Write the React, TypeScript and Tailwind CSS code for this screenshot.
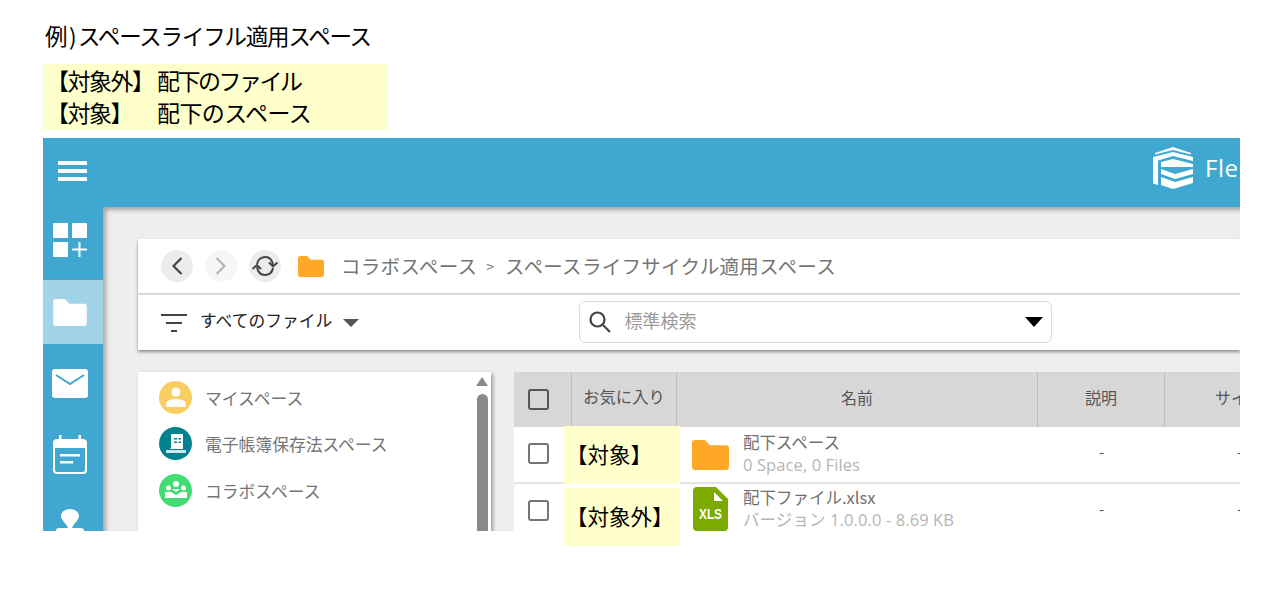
import React from 'react';

const JP = "font-['Noto_Sans_CJK_JP',sans-serif]";

const FolderIcon = ({ className, fill }: { className: string; fill: string }) => (
  <svg viewBox="0 0 36 29" className={className}>
    <path d="M3 0h9.5l5 5H33a3 3 0 0 1 3 3v18a3 3 0 0 1-3 3H3a3 3 0 0 1-3-3V3a3 3 0 0 1 3-3z" fill={fill} />
  </svg>
);

const Logo = () => (
  <svg viewBox="0 0 40 42" className="w-[40px] h-[42px] shrink-0" fill="#fff">
    <path d="M20 0 38 6v1.500L20 3 2 7.500V6z" />
    <path d="M0 10 20 5l20 5v4L20 9 5 13.500V38l-5-1.500z" />
    <path d="M8 15 20 12l20 5v3H8z" />
    <path d="M8 22l14 5 18-5v5l-18 5-14-5z" />
    <path d="M8 30l14 5 18-5v6l-20 6-12-4z" />
  </svg>
);

const SideItem = ({ className, children }: { className: string; children: React.ReactNode }) => (
  <div className={`shrink-0 flex items-center justify-center pr-[6px] ${className}`}>{children}</div>
);

const Sidebar = () => (
  <div className="w-[60px] shrink-0 flex flex-col">
    <SideItem className="h-[73px] pb-[7px] border-b border-[#6b9db3]">
      <svg viewBox="0 0 34 34" className="w-[34px] h-[34px]" fill="#fff">
        <rect x="0" y="0" width="15" height="15" rx="1" />
        <rect x="19" y="0" width="15" height="15" rx="1" />
        <rect x="0" y="19" width="15" height="15" rx="1" />
        <path d="M25.500 19h2v6.500H34v2h-6.500V34h-2v-6.500H19v-2h6.500z" />
      </svg>
    </SideItem>
    <SideItem className="h-[64px] bg-[#a2d4e8]">
      <FolderIcon className="w-[34px] h-[27px]" fill="#fff" />
    </SideItem>
    <SideItem className="h-[79px]">
      <svg viewBox="0 0 36 29" className="w-[36px] h-[29px]">
        <rect width="36" height="29" rx="3" fill="#fff" />
        <path d="M4 6l14 9 14-9" fill="none" stroke="#40a8d0" strokeWidth="2" />
      </svg>
    </SideItem>
    <SideItem className="h-[62px]">
      <svg viewBox="0 0 34 39" className="w-[34px] h-[39px]">
        <rect x="1" y="5" width="32" height="33" rx="3" fill="none" stroke="#fff" strokeWidth="2" />
        <path d="M1 8a3 3 0 0 1 3-3h26a3 3 0 0 1 3 3v5H1z" fill="#fff" />
        <rect x="6" y="0" width="2.500" height="6" fill="#fff" />
        <rect x="25.500" y="0" width="2.500" height="6" fill="#fff" />
        <rect x="7" y="19" width="20" height="2.500" fill="#fff" />
        <rect x="7" y="26" width="13" height="2.500" fill="#fff" />
      </svg>
    </SideItem>
    <div className="shrink-0 flex justify-center pr-[6px] pt-[24px]">
      <svg viewBox="0 0 28 40" className="w-[28px] h-[40px] shrink-0" fill="#fff">
        <path d="M14 0c5 0 9 3 9 7 0 4-5 7-7 12h-4C10 14 5 11 5 7c0-4 4-7 9-7z" />
        <rect x="0" y="19" width="28" height="14" rx="3" />
      </svg>
    </div>
  </div>
);

const Toolbar = () => (
  <div className="bg-white shadow-[0_2px_3px_rgba(0,0,0,0.4)]">
    <div className="h-[56px] border-b-2 border-[#d9d9d9] flex items-center pl-[23px]">
      <div className="w-8 h-8 rounded-full bg-[#ececec] flex items-center justify-center">
        <svg viewBox="0 0 12 20" className="w-[12px] h-[20px]" fill="none" stroke="#444" strokeWidth="2.200">
          <path d="M10.500 2 2.500 10l8 8" />
        </svg>
      </div>
      <div className="w-8 h-8 rounded-full bg-[#f6f6f6] flex items-center justify-center ml-[12px]">
        <svg viewBox="0 0 12 20" className="w-[12px] h-[20px]" fill="none" stroke="#b5b5b5" strokeWidth="2.200">
          <path d="M1.500 2l8 8-8 8" />
        </svg>
      </div>
      <div className="w-8 h-8 rounded-full bg-[#ececec] flex items-center justify-center ml-[12px]">
        <svg viewBox="0 0 28 24" className="w-[28px] h-[24px]" fill="none" stroke="#444" strokeWidth="2">
          <path d="M6 10C7 5 11 3 14.500 3 18 3 21 5 22 11" />
          <path d="M18 8.500l4 4 4.500-4" />
          <path d="M22 14c-1 5-4 7-8 7s-7-2-8-8" />
          <path d="M1.500 15 6 11l4 4" />
        </svg>
      </div>
      <FolderIcon className="w-[26px] h-[21px] ml-[17px]" fill="#ffa726" />
      <span className={`ml-[17px] text-[19.500px] tracking-[0.3px] text-[#757575] ${JP}`}>コラボスペース</span>
      <span className={`ml-[9px] text-[14px] text-[#757575] ${JP}`}>&gt;</span>
      <span className={`ml-[11px] text-[19.500px] tracking-[0.3px] text-[#757575] ${JP}`}>スペースライフサイクル適用スペース</span>
    </div>
    <div className="h-[55px] flex items-center pl-[23px]">
      <svg viewBox="0 0 26 18" className="w-[26px] h-[18px]" fill="#444">
        <rect x="0" y="0" width="26" height="2" />
        <rect x="5" y="8" width="16" height="2" />
        <rect x="10" y="16" width="6" height="2" />
      </svg>
      <span className={`ml-[13px] pb-[4px] text-[16.800px] text-[#222] ${JP}`}>すべてのファイル</span>
      <span className="ml-[11px] w-0 h-0 border-x-[8px] border-x-transparent border-t-[8px] border-t-[#555]" />
      <div className="ml-[220px] mb-[2px] w-[473px] h-[42px] border border-[#dcdcdc] rounded-[6px] flex items-center pl-[8px] pr-[8px]">
        <svg viewBox="0 0 24 24" className="w-[24px] h-[24px]" fill="none" stroke="#444" strokeWidth="2.200">
          <circle cx="9.500" cy="9.500" r="7" />
          <path d="m15 15 7 7" />
        </svg>
        <span className={`ml-[12px] pb-[2px] text-[18px] text-[#9a9a9a] ${JP}`}>標準検索</span>
        <span className="ml-auto w-0 h-0 border-x-[9px] border-x-transparent border-t-[10px] border-t-black" />
      </div>
    </div>
  </div>
);

const SpaceRow = ({ color, label, children }: { color: string; label: string; children: React.ReactNode }) => (
  <div className="h-[46.500px] flex items-center pl-[21px]">
    <div className="w-[33px] h-[33px] rounded-full flex items-center justify-center" style={{ backgroundColor: color }}>
      {children}
    </div>
    <span className={`ml-[13px] pt-[2px] text-[16.800px] text-[#757575] ${JP}`}>{label}</span>
  </div>
);

const SpaceList = () => (
  <div className="w-[353px] shrink-0 h-[200px] bg-white shadow-[2px_2px_4px_rgba(0,0,0,0.35)] relative pt-[2px]">
    <SpaceRow color="#f8cd62" label="マイスペース">
      <svg viewBox="0 0 20 20" className="w-[20px] h-[20px]" fill="#fff">
        <circle cx="10" cy="5" r="4.500" />
        <path d="M0 20v-3c0-3 4.500-5 10-5s10 2 10 5v3z" />
      </svg>
    </SpaceRow>
    <SpaceRow color="#00838f" label="電子帳簿保存法スペース">
      <svg viewBox="0 0 20 20" className="w-[20px] h-[20px]">
        <path d="M5 0h12v15H4c1-1 1-2 1-3z" fill="#fff" />
        <path d="M0 16h20v3H0z" fill="#cfe6e8" />
        <path d="M8 4h3v1.500H8zM12.500 4H15v1.500h-2.500zM8 7.500h3V9H8zM12.500 7.500H15V9h-2.500z" fill="#00838f" />
      </svg>
    </SpaceRow>
    <SpaceRow color="#42db74" label="コラボスペース">
      <svg viewBox="0 0 22 18" className="w-[22px] h-[18px]" fill="#fff">
        <circle cx="11" cy="3" r="3" />
        <circle cx="3.500" cy="7" r="2.500" />
        <circle cx="18.500" cy="7" r="2.500" />
        <path d="M0 11h6l5 3 5-3h6v6H0z" />
        <path d="M7 8h8l-4 3z" />
      </svg>
    </SpaceRow>
    <div className="absolute right-[3px] top-[5px] w-0 h-0 border-x-[6px] border-x-transparent border-b-[9px] border-b-[#8a8a8a]" />
    <div className="absolute right-[3px] top-[22px] w-[11px] h-[178px] rounded-full bg-[#8a8a8a]" />
  </div>
);

const Check = ({ header }: { header?: boolean }) => (
  <div className={`w-[21px] h-[21px] rounded-[3px] border-2 ${header ? 'border-[#555]' : 'border-[#757575]'}`} />
);

const TableHead = () => (
  <div className={`h-[55px] bg-[#d7d7d7] flex text-[16px] text-[#555] ${JP}`}>
    <div className="w-[58px] flex items-center pl-[14px] border-r border-[#bdbdbd]">
      <Check header />
    </div>
    <div className="w-[105px] pb-[6px] flex items-center justify-center border-r border-[#bdbdbd] text-[16.400px]">お気に入り</div>
    <div className="w-[361px] pb-[6px] flex items-center justify-center border-r border-[#bdbdbd]">名前</div>
    <div className="w-[127px] pb-[6px] flex items-center justify-center border-r border-[#bdbdbd]">説明</div>
    <div className="flex-1 pb-[6px] flex items-center pl-[50px]">サイズ</div>
  </div>
);

const FileRow = ({ icon, name, meta, textClass, rowClass }: { icon: React.ReactNode; name: string; meta: string; textClass: string; rowClass: string }) => (
  <div className={`bg-white flex items-start ${rowClass}`}>
    <div className="w-[58px] pl-[14px] pt-[16px]">
      <Check />
    </div>
    <div className="w-[105px]" />
    <div className="w-[361px] flex">
      <div className="w-[66px] flex justify-center pt-[4px]">{icon}</div>
      <div className={`flex flex-col ${textClass}`}>
        <span className={`text-[16.500px] leading-[23px] text-[#6f6f6f] ${JP}`}>{name}</span>
        <span className="text-[16.500px] leading-[21px] tracking-[0.1px] text-[#b5b5b5] font-['Open_Sans','Noto_Sans_CJK_JP',sans-serif]">{meta}</span>
      </div>
    </div>
    <div className={`w-[127px] text-center pt-[14px] text-[15px] text-[#555] ${JP}`}>-</div>
    <div className={`pl-[72px] pt-[14px] text-[15px] text-[#555] ${JP}`}>-</div>
  </div>
);

const XlsIcon = () => (
  <svg viewBox="0 0 35 44" className="w-[35px] h-[44px] -mt-[1px]">
    <path d="M4 0h19l12 12v28a4 4 0 0 1-4 4H4a4 4 0 0 1-4-4V4a4 4 0 0 1 4-4z" fill="#7cab00" />
    <path d="M21 5l9 9h-9z" fill="#fff" />
    <text x="17.500" y="32" textAnchor="middle" fontSize="15" fontWeight="700" fill="#fff" fontFamily="'Liberation Sans',sans-serif" textLength="23" lengthAdjust="spacingAndGlyphs">XLS</text>
  </svg>
);

const Annotation = ({ className, children }: { className: string; children: React.ReactNode }) => (
  <div className={`absolute left-[564px] w-[116px] h-[58px] bg-[#ffffcc] flex items-center pl-[2px] pb-[2px] text-[21.500px] text-black ${JP} ${className}`}>
    {children}
  </div>
);

export default function App() {
  return (
    <div className="relative w-[1281px] h-[607px] bg-white overflow-hidden pl-[43px] pt-[17px]">
      <div className={`h-[38px] pl-[2px] flex items-center text-[22.500px] tracking-[-1.2px] text-black ${JP}`}>
        <span className="tracking-[1.5px]">例)</span>
        <span>スペースライフル適用スペース</span>
      </div>
      <div className={`mt-[9px] w-[345px] h-[66px] bg-[#ffffcc] text-[23px] leading-[32px] text-black tracking-[-0.6px] ${JP}`}>
        <div className="flex">
          <span className="w-[114px] pl-[3px] tracking-[-1.5px]">【対象外】</span>
          <span className="tracking-[-2.500px]">配下のファイル</span>
        </div>
        <div className="flex">
          <span className="w-[114px] pl-[3px] tracking-[-1.5px]">【対象】</span>
          <span>配下のスペース</span>
        </div>
      </div>
      <div className="mt-[8px] w-[1197px] h-[393px] overflow-hidden bg-[#40a8d0] flex flex-col">
        <div className="h-[69px] shrink-0 flex items-center pl-[15px]">
          <div className="flex flex-col gap-[4px] w-[29px] mb-[3px]">
            <div className="h-[4px] bg-white" />
            <div className="h-[4px] bg-white" />
            <div className="h-[4px] bg-white" />
          </div>
          <div className="ml-auto flex items-center w-[87px] mb-[9px]">
            <Logo />
            <span className="ml-[12px] text-[24px] tracking-[0.5px] text-white font-['Open_Sans',sans-serif]">Fle</span>
          </div>
        </div>
        <div className="flex flex-1 min-h-0">
          <Sidebar />
          <div className="flex-1 min-w-0 bg-[#eeeeee] shadow-[inset_3px_3px_4px_rgba(0,0,0,0.3)] pl-[35px] pt-[32px] overflow-hidden">
            <Toolbar />
            <div className="mt-[22px] flex gap-[23px]">
              <SpaceList />
              <div className="w-[760px] shrink-0">
                <TableHead />
                <FileRow rowClass="h-[57px] border-b-2 border-[#e4e4e4]" textClass="pt-[4px]" icon={<FolderIcon className="w-[37px] h-[30px] mt-[9px]" fill="#ffa726" />} name="配下スペース" meta="0 Space, 0 Files" />
                <FileRow rowClass="h-[56px]" textClass="pt-[2px]" icon={<XlsIcon />} name="配下ファイル.xlsx" meta="バージョン 1.0.0.0 - 8.69 KB" />
              </div>
            </div>
          </div>
        </div>
      </div>
      <Annotation className="top-[426px]">【対象】</Annotation>
      <Annotation className="top-[488px]">【対象外】</Annotation>
    </div>
  );
}
